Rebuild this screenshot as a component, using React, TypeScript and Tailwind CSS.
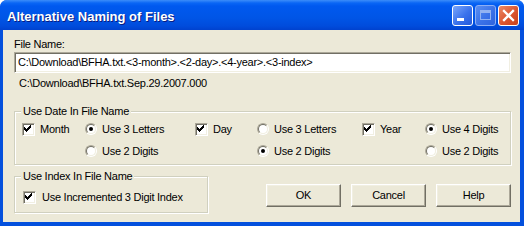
import React from "react";

function Check() {
  // classic sunken checkbox with the pixel check mark
  const cols = [
    [2, 4],
    [3, 5],
    [4, 6],
    [5, 5],
    [6, 4],
    [7, 3],
    [8, 2],
  ];
  return (
    <span className="relative w-[13px] h-[13px] shrink-0 bg-white border border-t-[#ACA899] border-l-[#ACA899] border-b-white border-r-white shadow-[inset_1px_1px_0_#716F64,inset_-1px_-1px_0_#F1EFE2]">
      <svg className="absolute left-0 top-0" width="11" height="11" viewBox="0 0 11 11" shapeRendering="crispEdges">
        {cols.map(([x, y]) => (
          <rect key={x} x={x - 1} y={y - 1} width="1" height="3" fill="#000" />
        ))}
      </svg>
    </span>
  );
}

function Radio({ on }: { on?: boolean }) {
  return (
    <span className="flex w-[12px] h-[12px] shrink-0 rounded-full border border-t-[#ACA899] border-l-[#ACA899] border-r-white border-b-white">
      <span className="flex flex-1 items-center justify-center rounded-full bg-white border border-t-[#716F64] border-l-[#716F64] border-r-[#F1EFE2] border-b-[#F1EFE2]">
        {on && <span className="w-[4px] h-[4px] rounded-full bg-black" />}
      </span>
    </span>
  );
}

function CheckItem({ label }: { label: string }) {
  return (
    <div className="flex items-center gap-[5px]">
      <Check />
      <span>{label}</span>
    </div>
  );
}

function RadioItem({ label, on }: { label: string; on?: boolean }) {
  return (
    <div className="flex items-center gap-[5px]">
      <Radio on={on} />
      <span>{label}</span>
    </div>
  );
}

function Button({ children }: { children: React.ReactNode }) {
  return (
    <button className="w-[75px] h-[23px] flex items-center justify-center bg-[#ECE9D8] border border-t-white border-l-white border-b-[#716F64] border-r-[#716F64] shadow-[inset_-1px_-1px_0_#ACA899,inset_1px_1px_0_#F1EFE2]">
      {children}
    </button>
  );
}

function TitleBar() {
  return (
    <div className="h-[30px] shrink-0 flex pl-[7px] pr-[5px] bg-[linear-gradient(to_bottom,#3C8DF9_0px,#0A66F5_3px,#0059EF_6px,#0055E6_18px,#004CDC_26px,#0042CE_30px)]">
      <span className="self-center pt-[3px] text-[13px] leading-[15px] font-bold text-white [text-shadow:1px_1px_0_#0A1C80]">
        Alternative Naming of Files
      </span>
      <div className="ml-auto mt-[5px] flex gap-[2px] h-[21px]">
        <div className="w-[21px] h-[21px] rounded-[3px] border border-white bg-[linear-gradient(135deg,#7AA6FB,#3A72EC_55%,#2359DB)]">
          <svg width="19" height="19" viewBox="0 0 19 19" shapeRendering="crispEdges">
            <rect x="4" y="12" width="7" height="3" fill="#fff" />
          </svg>
        </div>
        <div className="w-[21px] h-[21px] rounded-[3px] border border-[#8CAEF5] bg-[linear-gradient(135deg,#5A8EF2,#3B72E8_55%,#2E63DE)]">
          <svg width="19" height="19" viewBox="0 0 19 19" shapeRendering="crispEdges">
            <rect x="4.5" y="4.5" width="10" height="9" fill="none" stroke="#93B3F2" strokeWidth="1" />
            <rect x="4" y="4" width="11" height="3" fill="#93B3F2" />
          </svg>
        </div>
        <div className="w-[21px] h-[21px] rounded-[3px] border border-white bg-[linear-gradient(135deg,#EC8A66,#DA5530_55%,#C8401A)]">
          <svg width="19" height="19" viewBox="0 0 19 19">
            <path d="M5 5 L14 14 M14 5 L5 14" stroke="#fff" strokeWidth="2.3" strokeLinecap="square" />
          </svg>
        </div>
      </div>
    </div>
  );
}

export default function App() {
  return (
    <div className="w-[524px] h-[226px] bg-white">
      <div className="w-full h-full flex flex-col rounded-t-[7px] overflow-hidden bg-[#0450DD] font-['Liberation_Sans',Arial,sans-serif] text-[11px] leading-[13px] text-black">
        <TitleBar />

        <div className="flex-1 ml-[3px] mr-[4px] mb-[4px] bg-[#ECE9D8] flex flex-col pl-[11px] pr-[9px] pt-[8px] tracking-[-0.25px]">
          <div>File Name:</div>
          <div className="mt-[1px] h-[21px] flex items-center pl-[3px] bg-white whitespace-nowrap overflow-hidden border border-t-[#ACA899] border-l-[#ACA899] border-b-white border-r-white shadow-[inset_1px_1px_0_#716F64,inset_-1px_-1px_0_#F1EFE2]">
            {"C:\\Download\\BFHA.txt.<3-month>.<2-day>.<4-year>.<3-index>"}
          </div>
          <div className="mt-[4px] pl-[5px]">{"C:\\Download\\BFHA.txt.Sep.29.2007.000"}</div>

          {/* Date group */}
          <div className="relative mt-[21px] h-[54px] pl-[7px] pt-[6px] border border-[#D0D0BF] shadow-[inset_1px_1px_0_#fff,1px_1px_0_#fff]">
            <span className="absolute -top-[7px] left-[6px] px-[2px] bg-[#ECE9D8]">Use Date In File Name</span>
            <div className="grid grid-cols-[63px_110px_62px_105px_63px_1fr] grid-rows-[22px_22px] items-center">
              <CheckItem label="Month" />
              <RadioItem label="Use 3 Letters" on />
              <CheckItem label="Day" />
              <RadioItem label="Use 3 Letters" />
              <CheckItem label="Year" />
              <RadioItem label="Use 4 Digits" on />

              <div />
              <RadioItem label="Use 2 Digits" />
              <div />
              <RadioItem label="Use 2 Digits" on />
              <div />
              <RadioItem label="Use 2 Digits" />
            </div>
          </div>

          <div className="mt-[11px] flex items-start">
            {/* Index group */}
            <div className="relative w-[194px] h-[37px] pl-[8px] pt-[14px] border border-[#D0D0BF] shadow-[inset_1px_1px_0_#fff,1px_1px_0_#fff]">
              <span className="absolute -top-[7px] left-[6px] px-[2px] bg-[#ECE9D8]">Use Index In File Name</span>
              <div className="flex items-center gap-[6px]">
                <Check />
                <span>Use Incremented 3 Digit Index</span>
              </div>
            </div>

            <div className="ml-auto mt-[8px] flex gap-[10px]">
              <Button>OK</Button>
              <Button>Cancel</Button>
              <Button>Help</Button>
            </div>
          </div>
        </div>
      </div>
    </div>
  );
}
